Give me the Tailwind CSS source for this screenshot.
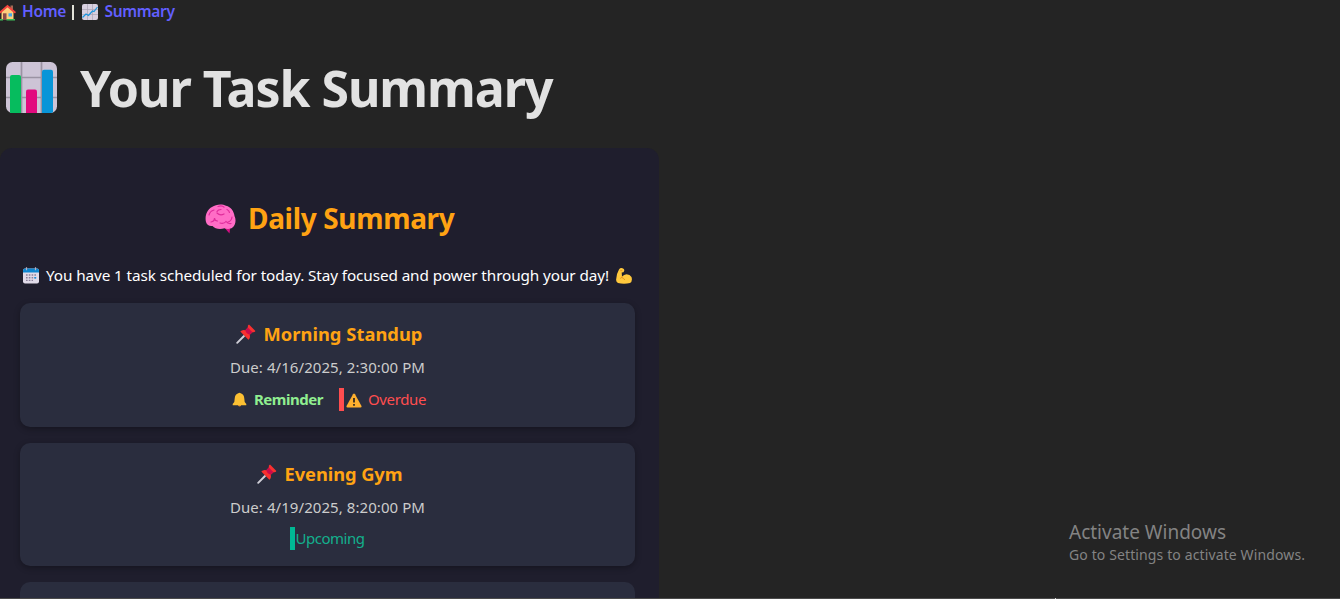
<!DOCTYPE html>
<html lang="en">
<head>
<meta charset="utf-8">
<title>Task Summary</title>
<script src="https://cdn.jsdelivr.net/npm/@tailwindcss/browser@4"></script>
</head>
<body class="relative h-[599px] overflow-hidden bg-[#242424] text-white font-['Noto_Sans',sans-serif] whitespace-nowrap">
<svg class="hidden">
  <symbol id="pin" viewBox="0 0 20 20">
    <path d="M1.200 18.800 8 12" stroke="#d0cfd8" stroke-width="1.900" stroke-linecap="round"/>
    <path d="M4.300 7.600Q6.300 5.300 9.300 6.300L11.800 3.500Q11.400 1.300 13 .6L19.400 7Q18.700 8.600 16.500 8.200L13.700 10.700Q14.700 13.700 12.400 15.700Z" fill="#f8312f"/>
    <path d="M9.300 6.300 11.800 3.500 16.500 8.200 13.700 10.700Q10.300 10 9.300 6.300Z" fill="#ca0b4a"/>
  </symbol>
</svg>

<nav class="flex h-6 items-center text-[15.5px] font-semibold">
  <svg class="h-[17px] w-[17px] -ml-px shrink-0" viewBox="0 0 17 17">
    <path d="M11.500 1.500h2.500v4h-2.500z" fill="#a56953"/>
    <path d="M2.500 7 8.500 2 14.500 7v8.500h-12z" fill="#ffce7c"/>
    <path d="M1.300 8.300 8.500 2 15.700 8.300" fill="none" stroke="#f4443e" stroke-width="2" stroke-linecap="round"/>
    <path d="M4 9.300h3.500V16H4z" fill="#8b4d48"/>
    <path d="M9.500 9.300H13v3.200H9.500z" fill="#44a8e8"/>
    <path d="M1 15h3v1.500H1zM7.500 15H16v1.500H7.500z" fill="#3dbb58"/>
  </svg>
  <a class="ml-[6px] w-[44px] tracking-[-0.31px] text-[#625fff]">Home</a>
  <span class="ml-[6px] h-[15px] w-[1.500px] bg-[#e2e2d8]"></span>
  <svg class="ml-[8px] h-4 w-4 shrink-0" viewBox="0 0 16 16">
    <rect width="16" height="16" rx="2" fill="#d8d0e0"/>
    <path d="M5.500 0v16M10.500 0v16M0 5.500h16M0 10.500h16" stroke="#aba3b5" stroke-width=".7"/>
    <path d="M.5 13.500 4 10 6.500 11.500 10.500 7 12 7.500 15.500 3" fill="none" stroke="#1a96df" stroke-width="1.200"/>
  </svg>
  <a class="ml-[7px] tracking-[-0.33px] text-[#625fff]">Summary</a>
</nav>

<h1 class="mt-[29px] flex h-[70px] items-center pl-[6px] text-[50px] font-bold text-[#e2e2e2]">
  <svg class="-mt-px h-[51px] w-[51px] shrink-0" viewBox="0 0 51 51">
    <rect width="51" height="51" rx="6.500" fill="#cdc4d6"/>
    <path d="M15.500 0v51M35.500 0v51M0 15.500h51M0 35.500h51" stroke="#9b93a3" stroke-width="1.700"/>
    <path d="M4 50.500V15q0-2 2-2h7q2 0 2 2v36H6q-2 0-2-.500Z" fill="#06bc5e"/>
    <path d="M20 51V29.500q0-2 2-2h7q2 0 2 2V51Z" fill="#e20a7e"/>
    <path d="M36 51V9.700q0-2 2-2h7q2 0 2 2V50q-1 1-2 1Z" fill="#0895d8"/>
  </svg>
  <span class="ml-[23px] tracking-[-1.040px]">Your Task Summary</span>
</h1>

<main class="mt-[25px] h-[451px] w-[659px] overflow-hidden rounded-t-xl bg-[#1f1e2d] pl-[20px] pr-6 pt-[50px]">
  <h2 class="flex h-10 items-center pl-[185px] text-[28px] font-bold text-[#ffa313]">
    <svg class="mt-px h-[30px] w-[31px] shrink-0" viewBox="0 0 31 30">
      <path d="M18 22 24.500 29.500 25.500 22Z" fill="#d40f83"/>
      <path d="M1 18C-.5 12 2 5.500 7 3 11 .3 17-.3 21 1.800 26 3 29 7.500 29.500 12 31.500 16 30.500 21 27.500 23.500 25 25.500 21.500 25 19.500 24.300 15 25.500 10 25 7.500 22 4.500 22.500 1.800 21 1 18Z" fill="#ff6dc6"/>
      <path d="M4 11q1-4 5-5M13 2.500q4-1.500 6 .7M22 5.500q2 1 2.500 3M6 18q3.500-.5 3.500-4 0 3 3 3M12 9q3 3 7 1M27 13q-.5 4-4 5M15 19q4 1 6-1.500 2 2.500 5 2M16 5.500q-3 0-4 2" fill="none" stroke="#df2c9b" stroke-width="1.200" stroke-linecap="round"/>
    </svg>
    <span class="ml-[12px] tracking-[-0.330px]">Daily Summary</span>
  </h2>

  <p class="mt-[25px] flex h-6 items-center pl-[3px] text-[15.300px]">
    <svg class="h-[17px] w-[16px] shrink-0" viewBox="0 0 16 17">
      <rect y="1.500" width="16" height="15" rx="2" fill="#e0dae8"/>
      <path d="M0 5.500v-2q0-2 2-2h12q2 0 2 2v2Z" fill="#0d86cf"/>
      <path d="M3.500.2v3M12.500.2v3" stroke="#b8b0c4" stroke-width="1.200"/>
      <path d="M3 8h10M3 10.700h10M3 13.400h7" stroke="#8a8099" stroke-width="1.400" stroke-dasharray="1.600 1.200"/>
      <path d="M11.400 10h1.800v1.500h-1.800z" fill="#0d95ea"/>
    </svg>
    <span class="ml-[7px] w-[563px] tracking-[-0.1px]">You have 1 task scheduled for today. Stay focused and power through your day!</span>
    <svg class="ml-[7px] mt-px h-[16px] w-[16px] shrink-0" viewBox="0 0 16 16">
      <path d="M3 1.500Q4-.2 6.500.2 8.500.6 8.300 2.500L7.500 4.200 5.700 4.500 6 8.500Q8 6.500 10.500 6.300 14 6.300 15.500 9 16.800 13.500 14 15 8 16.500 2 15-.3 14 .2 11 .8 5 3 1.500Z" fill="#ffc83d"/>
      <path d="M4.300 2.700h2M6 8.500l-1.500 2.200M5.800 9.500q2 .5 3 2.500" fill="none" stroke="#e08a1e" stroke-width=".9"/>
    </svg>
  </p>

  <section class="mt-4 flex h-[124px] flex-col items-center rounded-[10px] bg-[#2a2d3e] pt-[15px] shadow-[0_2px_6px_rgba(0,0,0,0.3)]">
    <h3 class="flex h-[31px] items-center pl-[5px] text-[18.300px] font-bold text-[#ffa313]">
      <svg class="h-5 w-5"><use href="#pin"/></svg>
      <span class="ml-[8px] w-[161px] tracking-[0.05px]">Morning Standup</span>
    </h3>
    <div class="mt-px flex h-[35px] items-center text-[15px] tracking-[0.067px] text-[#cccccc]">Due: 4/16/2025, 2:30:00 PM</div>
    <div class="mt-[3px] flex h-[23px] items-center pl-[3px] text-[15px]">
      <svg class="h-[15px] w-[15px]" viewBox="0 0 15 15">
        <path d="M5.800 12.500h3.500q0 2-1.700 2t-1.800-2" fill="#e0912f"/>
        <path d="M6.300 1.300q1.200-1.300 2.400 0Q12 2.200 12.300 6.500L12.700 10 14.300 12v1.300H.7V12L2.300 10 2.700 6.500Q3 2.200 6.300 1.300Z" fill="#fcc033"/>
      </svg>
      <span class="ml-[7px] w-[70px] font-bold tracking-[-0.470px] text-[#90ee90]">Reminder</span>
      <span class="ml-[15px] flex h-[23px] items-center border-l-[5px] border-[#ff4d4f] text-[#ff4d4f]">
        <svg class="ml-[2px] mt-px h-[15px] w-[16px]" viewBox="0 0 16 15">
          <path d="M7 1.200q1-1.500 2 0L15.500 13q.3 1.500-1 1.500h-13Q.2 14.500.5 13Z" fill="#ffb02e"/>
          <path d="M8 5v4.500M8 11v1.800" stroke="#2b2320" stroke-width="1.700"/>
        </svg>
        <span class="ml-[6px] tracking-[-0.350px]">Overdue</span>
      </span>
    </div>
  </section>

  <section class="mt-4 flex h-[123px] flex-col items-center rounded-[10px] bg-[#2a2d3e] pt-[15px] shadow-[0_2px_6px_rgba(0,0,0,0.3)]">
    <h3 class="flex h-[31px] items-center pl-[5px] text-[18.300px] font-bold text-[#ffa313]">
      <svg class="h-5 w-5"><use href="#pin"/></svg>
      <span class="ml-[8px] w-[119px] tracking-[-0.06px]">Evening Gym</span>
    </h3>
    <div class="mt-px flex h-[34px] items-center text-[15px] tracking-[0.067px] text-[#cccccc]">Due: 4/19/2025, 8:20:00 PM</div>
    <div class="mt-[3px] flex h-[23px] items-center border-l-[5px] border-[#00b894] text-[15px] tracking-[-0.480px] text-[#13b08d]">Upcoming</div>
  </section>

  <section class="mt-4 h-[17px] rounded-t-[10px] bg-[#2a2d3e]"></section>
</main>

<aside class="absolute left-[1069px] top-[519px] text-[#838383]">
  <div class="h-[26px] text-[19px] leading-[26px]">Activate Windows</div>
  <div class="h-[20px] text-[14px] leading-[20px] tracking-[0.12px]">Go to Settings to activate Windows.</div>
</aside>
<div class="absolute inset-x-0 bottom-0 h-px bg-[#4b4b4b]"></div>
<div class="absolute bottom-0 left-[1055px] h-px w-px bg-[#d0d0d0]"></div>
</body>
</html>
